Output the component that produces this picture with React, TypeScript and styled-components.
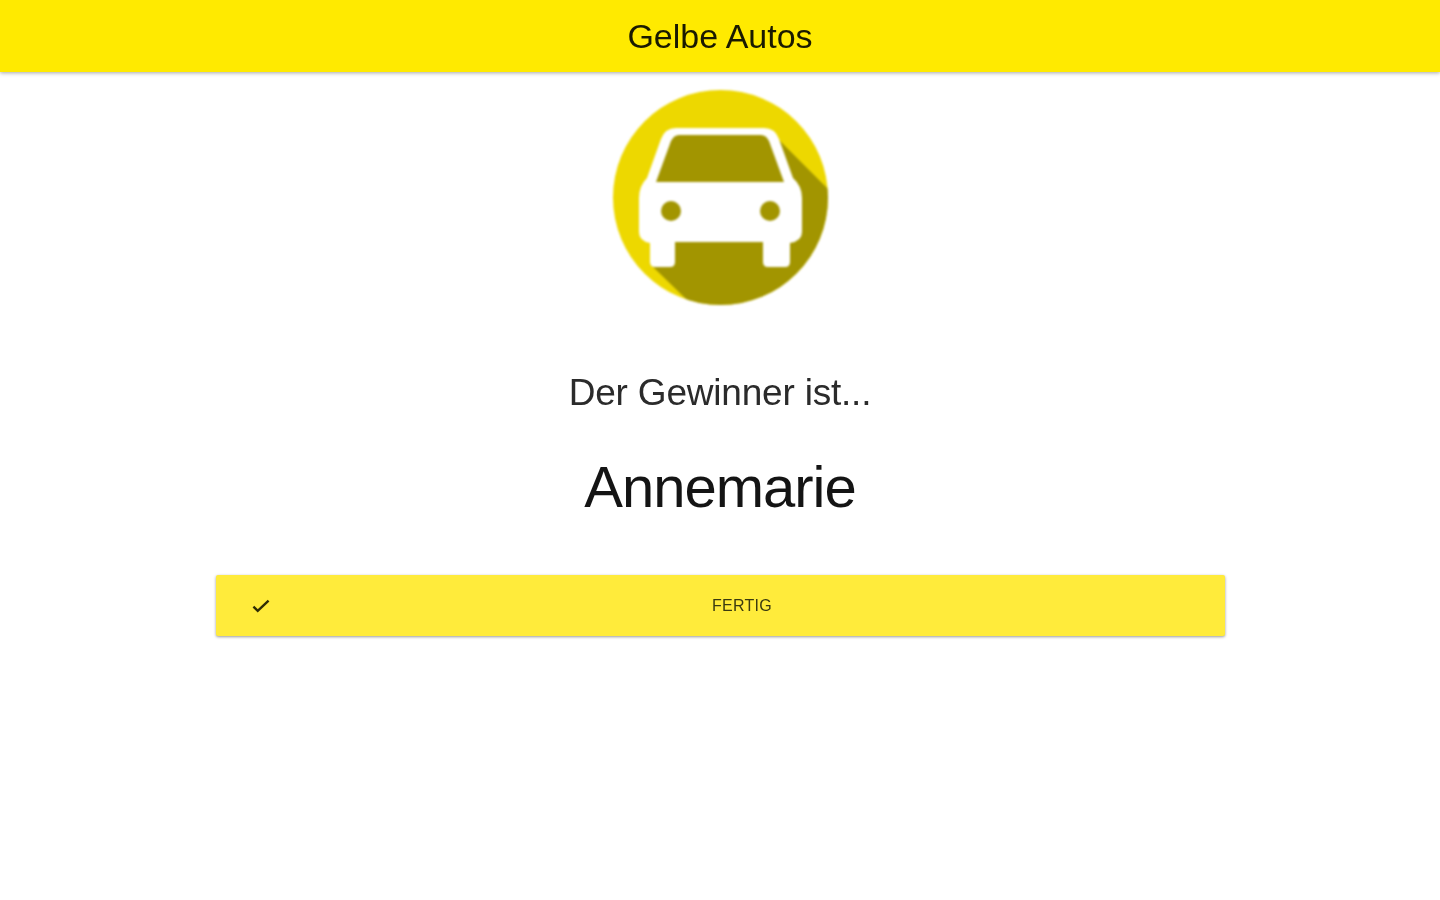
import React from "react";
import styled, { createGlobalStyle } from "styled-components";

const Global = createGlobalStyle`
  html, body { margin: 0; padding: 0; background: #fff; }
  body { font-family: "Liberation Sans", Arial, sans-serif; }
`;

const Page = styled.div`
  display: flex;
  flex-direction: column;
  align-items: center;
  min-height: 900px;
`;

const Header = styled.header`
  align-self: stretch;
  height: 72px;
  background: #ffea00;
  box-shadow: 0 1px 4px rgba(0, 0, 0, 0.35);
  display: flex;
  align-items: center;
  justify-content: center;
`;

const Title = styled.h1`
  margin: 0;
  font-size: 34px;
  font-weight: 400;
  color: #1a1a00;
  filter: blur(0.7px);
`;

const Logo = styled.svg`
  display: block;
  width: 216px;
  height: 216px;
  margin-top: 17px;
  filter: blur(0.8px);
`;

const Lead = styled.div`
  margin-top: 64px;
  font-size: 37px;
  letter-spacing: -0.2px;
  line-height: 48px;
  font-weight: 400;
  color: #2b2b2b;
  filter: blur(0.6px);
`;

const Winner = styled.div`
  margin-top: 30px;
  font-size: 58px;
  letter-spacing: -1px;
  line-height: 80px;
  font-weight: 400;
  color: #141414;
  filter: blur(0.6px);
`;

const DoneButton = styled.button`
  box-sizing: border-box;
  width: 1009px;
  height: 61px;
  margin: 48px 0 0 1px;
  padding: 0 13px 0 32px;
  border: none;
  border-radius: 2px;
  background: #ffeb3b;
  box-shadow: 0 1px 3px rgba(0, 0, 0, 0.4);
  display: grid;
  grid-template-columns: 24px 1fr;
  align-items: center;
  font-family: inherit;
`;

const CheckIcon = styled.svg`
  width: 26px;
  height: 26px;
  filter: blur(0.5px);
`;

const Label = styled.span`
  font-size: 16px;
  font-weight: 400;
  letter-spacing: 0.3px;
  color: #3a3a10;
  text-align: center;
  filter: blur(0.7px);
`;

export default function App() {
  return (
    <Page>
      <Global />
      <Header>
        <Title>Gelbe Autos</Title>
      </Header>
      <Logo viewBox="612 89 216 216" aria-hidden="true">
        <defs>
          <clipPath id="disc">
            <circle cx="720.5" cy="197.5" r="107.5" />
          </clipPath>
        </defs>
        <circle cx="720.5" cy="197.5" r="107.5" fill="#edd800" />
        <polygon
          clipPath="url(#disc)"
          fill="#a29500"
          points="775,136 860,221 860,330 718,330 650,264"
        />
        <path
          fill="#fff"
          d="M676 128H764Q775 128 779 139L793 178Q802 186 802 198V232Q802 241 790 243V262Q790 267 785 267H768Q763 267 763 262V242H675V262Q675 267 670 267H655Q650 267 650 262V243Q639 241 639 232V198Q639 186 647 178L661 139Q665 128 676 128Z"
        />
        <path
          fill="#a29500"
          d="M679 135H761Q766 135 769 141L784 182H656L671 141Q674 135 679 135Z"
        />
        <circle cx="671" cy="211" r="10" fill="#a29500" />
        <circle cx="770" cy="211" r="10" fill="#a29500" />
      </Logo>
      <Lead>Der Gewinner ist...</Lead>
      <Winner>Annemarie</Winner>
      <DoneButton type="button">
        <CheckIcon viewBox="0 0 24 24" aria-hidden="true">
          <path d="M5 12.5 9 16.5 19 7" fill="none" stroke="#2f2d05" strokeWidth="2.2" />
        </CheckIcon>
        <Label>FERTIG</Label>
      </DoneButton>
    </Page>
  );
}
